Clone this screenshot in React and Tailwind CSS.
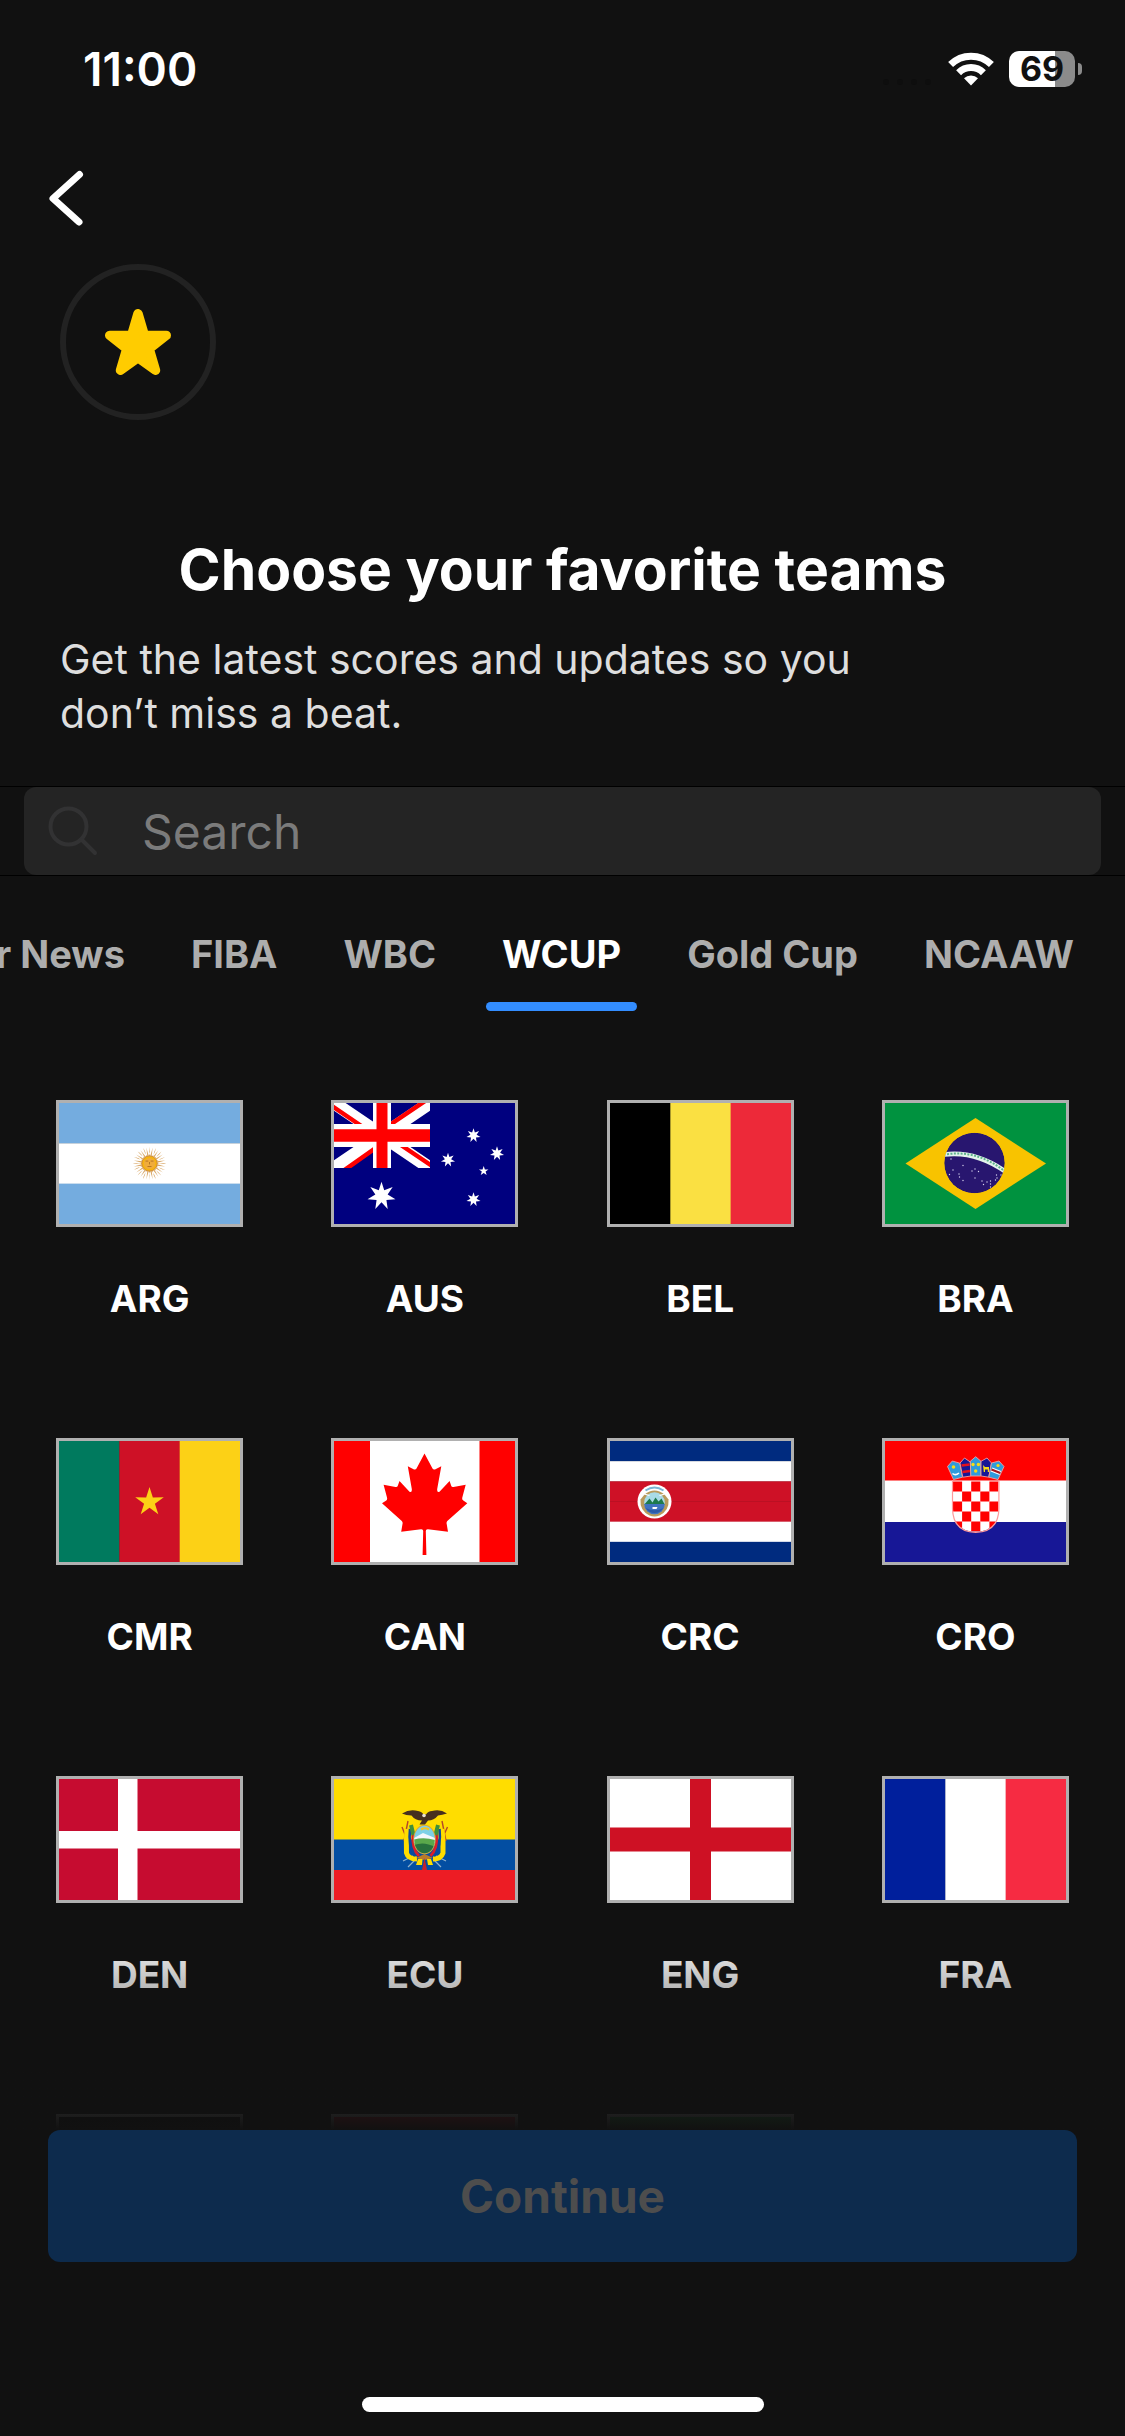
const FLAG_W = 181
const FLAG_H = 121

// polygon points of a star with n tips around (cx, cy), first tip up
function starPoints(cx, cy, outer, inner, n) {
  const pts = []
  for (let i = 0; i < n * 2; i++) {
    const r = i % 2 === 0 ? outer : inner
    const a = (Math.PI * i) / n - Math.PI / 2
    pts.push(`${(cx + r * Math.cos(a)).toFixed(2)},${(cy + r * Math.sin(a)).toFixed(2)}`)
  }
  return pts.join(' ')
}

function Bands({ colors, vertical = false }) {
  const size = (vertical ? FLAG_W : FLAG_H) / colors.length
  return colors.map((c, i) => (
    <rect
      key={i}
      x={vertical ? i * size : 0}
      y={vertical ? 0 : i * size}
      width={vertical ? size + 0.3 : FLAG_W}
      height={vertical ? FLAG_H : size + 0.3}
      fill={c}
    />
  ))
}

function Argentina() {
  const rays = Array.from({ length: 32 }, (_, i) => i * 11.25)
  return (
    <>
      <Bands colors={['#74acdf', '#ffffff', '#74acdf']} />
      <g transform="translate(90.5 60.5)">
        {rays.map((deg, i) => (
          <path
            key={deg}
            d={i % 2 ? 'M-0.8 -7 L0 -16 L0.8 -7Z' : 'M-0.7 -7 Q1.4 -12 0 -16.8 Q-0.6 -12 0.7 -7Z'}
            transform={`rotate(${deg})`}
            fill="#d8a868"
          />
        ))}
        <circle r="7.6" fill="#f6b40e" stroke="#c98432" strokeWidth="0.8" />
        <circle r="5.6" fill="#f0ac3c" />
        <path d="M-4 -2.4h2.8M1.2 -2.4h2.8M0 -1.5v2.4M-2 3h4" stroke="#b0701e" strokeWidth="0.9" fill="none" />
      </g>
    </>
  )
}

function Australia() {
  return (
    <>
      <rect width="181" height="121" fill="#00007f" />
      <svg width="96" height="65" viewBox="0 0 96 65">
        <path d="M0 0L96 65M96 0L0 65" stroke="#fff" strokeWidth="13" />
        <path d="M-2 3L34 27.5M94 -4L52 24.5" stroke="#f00" strokeWidth="4.5" />
        <path d="M7 69.5L48 40.5M98 63L58 36" stroke="#f00" strokeWidth="4.5" />
        <path d="M48 0V65" stroke="#fff" strokeWidth="18" />
        <path d="M0 32.5H96" stroke="#fff" strokeWidth="23" />
        <path d="M48 0V65" stroke="#f00" strokeWidth="11" />
        <path d="M0 32.5H96" stroke="#f00" strokeWidth="12.5" />
      </svg>
      <g fill="#fff">
        <polygon points={starPoints(47.5, 93, 14.3, 6.3, 7)} />
        <polygon points={starPoints(139.5, 32.5, 7.2, 3.2, 7)} />
        <polygon points={starPoints(114, 57, 7.2, 3.2, 7)} />
        <polygon points={starPoints(163, 50.5, 7.2, 3.2, 7)} />
        <polygon points={starPoints(139.5, 96.5, 7.2, 3.2, 7)} />
        <polygon points={starPoints(149.7, 68, 5, 2, 5)} />
      </g>
    </>
  )
}

function Brazil() {
  const dots = [
    [66, 56], [68, 67], [64.5, 71.5], [74, 71], [74.5, 74], [78, 77.5], [78, 62.5], [87, 68], [90, 66], [93.5, 68.5],
    [90, 75], [97, 78], [98.5, 81.5], [102, 79], [105.5, 78], [105.5, 81], [105.5, 84], [110.5, 77], [112, 75], [111.5, 72], [116, 72],
  ]
  return (
    <>
      <rect width="181" height="121" fill="#00923f" />
      <polygon points="90.5,15 161,60.5 90.5,106 20.5,60.5" fill="#f8c300" />
      <clipPath id="globe">
        <circle cx="89.5" cy="60" r="30.3" />
      </clipPath>
      <g clipPath="url(#globe)">
        <circle cx="89.5" cy="60" r="30.3" fill="#28166f" />
        <path d="M56 52Q90 46 124 71" fill="none" stroke="#e4f3ec" strokeWidth="4.6" />
        <path d="M62 51.2Q92 47 118 67" fill="none" stroke="#5fb38d" strokeWidth="2" strokeDasharray="2 1.4" />
        {dots.map(([x, y], i) => (
          <circle key={i} cx={x} cy={y} r="0.7" fill="#d8d4ee" />
        ))}
      </g>
    </>
  )
}

function Cameroon() {
  return (
    <>
      <Bands vertical colors={['#007a5e', '#ce1126', '#fcd116']} />
      <polygon points={starPoints(90.5, 61, 15, 5.7, 5)} fill="#fcd116" />
    </>
  )
}

function Canada() {
  return (
    <>
      <rect width="181" height="121" fill="#fff" />
      <rect width="36" height="121" fill="#f00" />
      <rect x="145.5" width="35.5" height="121" fill="#f00" />
      <path
        d="M90.5 12.5 L98.5 27.5 Q99.5 29.2 101.5 28.2 L107.3 25.3 L103.2 48 Q102.8 52 105.5 50.8 L115.6 40 L117.3 45 Q117.8 46.4 119.5 46 L131.7 43.7 L128.3 56.5 Q127.8 58.6 129.3 59.5 L133.3 62.3 L113.3 80 Q112.2 81.3 112.7 83 L114 90.8 L94 88.2 Q91.8 88 91.8 90 L92.4 114 H88.6 L89.2 90 Q89.2 88 87 88.2 L67.2 90.8 L68.5 83 Q69 81.3 67.8 80 L48 62.3 L52.3 59.5 Q53.5 58.6 53 56.5 L49.6 43.7 L61.5 46 Q63.2 46.4 63.7 45 L65.5 40 L75.5 50.8 Q78.2 52 77.8 48 L73.8 25.3 L79.5 28.2 Q81.5 29.2 82.5 27.5Z"
        fill="#f00"
      />
    </>
  )
}

function CostaRica() {
  return (
    <>
      <Bands colors={['#002b7f', '#ffffff', '#ce1126', '#ce1126', '#ffffff', '#002b7f']} />
      <g transform="translate(44.5 60.5)">
        <circle r="17" fill="#fff" />
        <path d="M-9 -11Q0 -17 9 -11" stroke="#7ab6d6" strokeWidth="2" fill="none" />
        <path d="M-10 -7Q0 -15 10 -7L14 -2Q15 9 5 14Q0 16 -5 14Q-15 9 -14 -2Z" fill="#b99a5b" />
        <circle cy="1" r="10.3" fill="#a9dbe6" />
        <path d="M-10.2 3L-5 -3L-2 1L1 -4L4 0L7 -3L10.2 3Z" fill="#1d7a4d" />
        <path d="M-10.3 2.5H10.3A10.3 10.3 0 0 1 -10.3 2.5Z" fill="#3f73c0" />
        <path d="M-8.8 6.5Q0 11 8.8 6.5A10.3 10.3 0 0 1 -8.8 6.5Z" fill="#2c5aa8" />
        <path d="M-2 5.5L3 5.5L2 7.5H-2Z" fill="#fff" />
        <path d="M-12 -8L-5 -6M12 -8L5 -6" stroke="#fff" strokeWidth="1.2" />
      </g>
    </>
  )
}

function Croatia() {
  const squares = []
  for (let r = 0; r < 5; r++) {
    for (let c = 0; c < 5; c++) {
      if ((r + c) % 2 === 0) squares.push([c, r])
    }
  }
  return (
    <>
      <rect width="181" height="121" fill="#fff" />
      <rect width="181" height="39.5" fill="#f00" />
      <rect y="81" width="181" height="40" fill="#171796" />
      <clipPath id="shield">
        <path d="M67.8 40V68Q68.5 90.5 90.7 90.8Q113 90.5 113.6 68V40Z" />
      </clipPath>
      <g clipPath="url(#shield)">
        <rect x="66" y="38" width="50" height="54" fill="#fff" />
        {squares.map(([c, r]) => (
          <rect key={`${c}-${r}`} x={68 + c * 9.1} y={40.5 + r * 10} width="9.1" height="10" fill="#f00" />
        ))}
      </g>
      <path d="M67.5 39V68Q68.3 91 90.7 91.3Q113.3 91 113.9 68V39" fill="none" stroke="#ff9a9a" strokeWidth="1.2" />
      <g stroke="#f2a0a0" strokeWidth="0.9" strokeLinejoin="round">
        <path d="M62.5 25.5L67.3 20L74.8 22.2L77.5 36.2L68.5 38.5Z" fill="#2f9bdc" />
        <path d="M75 22L79.5 17L85.3 21L86 35L77.8 36.2Z" fill="#171796" />
        <path d="M85.3 20.3L90.7 15.7L96 20.3V35H85.8Z" fill="#2f9bdc" />
        <path d="M96 20.3L102 17L106.5 22L103.8 36.2L96 35Z" fill="#171796" />
        <path d="M106.5 22L114 20L119 25.5L113 38.5L103.8 36.2Z" fill="#2f9bdc" />
      </g>
      <path d="M76.5 24.5L84.6 23.5M77.5 31L85 30" stroke="#e6101c" strokeWidth="2.6" />
      <g fill="#f7db17">
        <circle cx="68.5" cy="26" r="1.8" />
        <circle cx="88" cy="23.5" r="1.7" />
        <circle cx="93.4" cy="23.5" r="1.7" />
        <circle cx="90.7" cy="30" r="1.7" />
        <circle cx="113" cy="24.5" r="1.6" />
        <path d="M98 24L100 26H104V31H102.8V28.5H100V31H98.8Z" />
      </g>
      <path d="M67.5 32.5Q70.5 35 74 32" stroke="#fff" strokeWidth="1.6" fill="none" />
      <path d="M106.5 28.5L115.3 32" stroke="#fff" strokeWidth="4.4" />
      <path d="M106.5 28.5L115.3 32" stroke="#a8161c" strokeWidth="2.2" />
    </>
  )
}

function Denmark() {
  return (
    <>
      <rect width="181" height="121" fill="#c60c30" />
      <path d="M59 0H78.5V52H181V69.5H78.5V121H59V69.5H0V52H59Z" fill="#fff" />
    </>
  )
}

function Ecuador() {
  return (
    <>
      <rect width="181" height="121" fill="#ffdd00" />
      <rect y="60.5" width="181" height="31" fill="#034ea2" />
      <rect y="91" width="181" height="30" fill="#ed1c24" />
      {/* lances */}
      <path d="M74 42L70 62M108 42L112 62M68 48L72 58M113.5 48L109 58" stroke="#b5472a" strokeWidth="1.4" />
      <path d="M79 77L69 82M102 77L112 82M82 80L74 88M99 80L107 88" stroke="#8fb0cc" strokeWidth="1.2" />
      {/* side flags */}
      <path d="M73 50Q72 62 72.5 74Q74 80 83 80" stroke="#ffdd00" strokeWidth="5" fill="none" />
      <path d="M108 50Q109.5 62 109 74Q107 80 99 80" stroke="#ffdd00" strokeWidth="5" fill="none" />
      <path d="M76 50Q74 68 81 77M105.5 50Q107.5 68 100 77" stroke="#0b4a9c" strokeWidth="2.6" fill="none" />
      <path d="M79 54Q77.5 70 85 77M102.5 54Q104 70 96.5 77" stroke="#d81e2c" strokeWidth="2.8" fill="none" />
      <path d="M77 46L79.5 56M104 46L101.5 56" stroke="#3f8f3a" strokeWidth="4" />
      <path d="M82 79L90.5 75L99 79L90.5 81Z" fill="#b97a2a" />
      <path d="M84 80L82 86L88 86L88.5 80ZM93 80L94 86L99 86L97 80Z" fill="#ffdd00" />
      <path d="M90.5 79L88 91H93Z" fill="#c4222c" />
      <clipPath id="oval">
        <ellipse cx="90.5" cy="60.5" rx="10.3" ry="13.8" />
      </clipPath>
      <ellipse cx="90.5" cy="60.5" rx="11.2" ry="14.8" fill="#d8a53a" />
      <g clipPath="url(#oval)">
        <rect x="78" y="45" width="25" height="32" fill="#7fd0e6" />
        <path d="M80 59L89 54L101 59V64H80Z" fill="#f4f7fb" />
        <path d="M80 60.5Q90 58 101 61V77H80Z" fill="#5aa84b" />
        <path d="M80 66Q90 62 101 68V77H80Z" fill="#27703c" />
        <path d="M87 50.5Q91 48 95 50.5" stroke="#f7c520" strokeWidth="2.2" fill="none" />
      </g>
      {/* condor */}
      <path
        d="M68 34.5Q76 29.5 84 32Q88 32.5 89.5 35.5L92 35.5Q94 32 98 32Q106 29.5 113 34.5Q108 36 104 36.5Q100 41.5 94 41.5L91 45.5H85.5L88 41.5Q81 41.5 77.5 36.5Q72 36.5 68 34.5Z"
        fill="#46301f"
      />
      <circle cx="90" cy="36.5" r="1.8" fill="#e8e0d4" />
    </>
  )
}

function England() {
  return (
    <>
      <rect width="181" height="121" fill="#fff" />
      <path d="M80 0H101V48.5H181V72.5H101V121H80V72.5H0V48.5H80Z" fill="#ce1124" />
    </>
  )
}

const teams = [
  { code: 'ARG', flag: <Argentina /> },
  { code: 'AUS', flag: <Australia /> },
  { code: 'BEL', flag: <Bands vertical colors={['#000000', '#fae042', '#ed2939']} /> },
  { code: 'BRA', flag: <Brazil /> },
  { code: 'CMR', flag: <Cameroon /> },
  { code: 'CAN', flag: <Canada /> },
  { code: 'CRC', flag: <CostaRica /> },
  { code: 'CRO', flag: <Croatia /> },
  { code: 'DEN', flag: <Denmark /> },
  { code: 'ECU', flag: <Ecuador /> },
  { code: 'ENG', flag: <England /> },
  { code: 'FRA', flag: <Bands vertical colors={['#001f9c', '#ffffff', '#f62b42']} /> },
]

// flags that only peek out above the footer
const nextTeams = [
  { id: 'ger', flag: <Bands colors={['#000000', '#dd0000', '#ffce00']} /> },
  { id: 'gha', flag: <Bands colors={['#ce1126', '#fcd116', '#006b3f']} /> },
  { id: 'irn', flag: <Bands colors={['#239f40', '#ffffff', '#da0000']} /> },
]

const tabs = ['Soccer News', 'FIBA', 'WBC', 'WCUP', 'Gold Cup', 'NCAAW']

function Flag({ children }) {
  return (
    <svg viewBox="0 0 181 121" className="h-[127px] w-[187px] border-[3px] border-[#b0b0b0]">
      {children}
    </svg>
  )
}

function StatusBar() {
  return (
    <div className="flex h-[138px] shrink-0 items-center justify-between pr-[43px] pl-[83px]">
      <span className="text-[46px] leading-none font-semibold">11:00</span>
      <div className="flex items-center gap-[15px]">
        <svg width="52" height="34" viewBox="0 0 52 34" fill="#0e0e0e" aria-label="No signal">
          <circle cx="5" cy="30" r="3" />
          <circle cx="19" cy="30" r="3" />
          <circle cx="33" cy="30" r="3" />
          <circle cx="47" cy="30" r="3" />
        </svg>
        <svg width="46" height="34" viewBox="0 0 46 34" fill="none" aria-label="Wi-Fi">
          <path d="M2.6 12.6A29 29 0 0 1 43.4 12.6" stroke="#fff" strokeWidth="7" />
          <path d="M10.6 20.7A17.6 17.6 0 0 1 35.4 20.7" stroke="#fff" strokeWidth="7" />
          <path d="M23 33.5L16 26.3A10 10 0 0 1 30 26.3Z" fill="#fff" />
        </svg>
        <div className="flex items-center gap-[3px]">
          <div className="flex h-9 w-[66px] items-center justify-center rounded-[10px] bg-linear-to-r from-white from-70% to-[#8b8b8b] to-70%">
            <span className="text-[34px] leading-none font-bold text-[#111]">69</span>
          </div>
          <div className="h-3 w-1 rounded-r-full bg-[#8b8b8b]" />
        </div>
      </div>
    </div>
  )
}

function Header() {
  return (
    <header className="shrink-0">
      <button type="button" aria-label="Back" className="ml-12 block h-[120px]">
        <svg width="36" height="56" viewBox="0 0 36 56" fill="none">
          <path d="M31.500 4.500L5 28.500L31 52" stroke="#fff" strokeWidth="7" strokeLinecap="round" strokeLinejoin="round" />
        </svg>
      </button>
      <div className="mt-[6px] ml-[60px] flex size-[156px] items-center justify-center rounded-full border-[6px] border-[#222]">
        <svg width="66" height="66" viewBox="0 0 66 66">
          <path
            d="M33 4.700L39.400 26.400H61.300L44.200 39.700L50.500 61.300L33 48.600L15.500 61.300L21.800 39.700L4.700 26.400H26.600Z"
            fill="#ffcc00"
            stroke="#ffcc00"
            strokeWidth="9.4"
            strokeLinejoin="round"
          />
        </svg>
      </div>
      <h1 className="mt-[114px] text-center text-[57px] leading-[72px] font-bold">Choose your favorite teams</h1>
      <p className="mt-[26px] ml-[60px] max-w-[820px] text-[41px] leading-[54px] text-[#dedede]">
        Get the latest scores and updates so you don’t miss a beat.
      </p>
    </header>
  )
}

function SearchBox() {
  return (
    <div className="mt-[46px] shrink-0 border-y border-black px-6">
      <label className="flex h-[88px] items-center rounded-xl bg-[#242424] pl-6">
        <svg width="50" height="50" viewBox="0 0 50 50" fill="none" stroke="#323233" strokeWidth="4" strokeLinecap="round">
          <circle cx="20.500" cy="20.500" r="18" />
          <path d="M34 34L47 47" />
        </svg>
        <input
          type="text"
          aria-label="Search"
          placeholder="Search"
          className="ml-[44px] min-w-0 flex-1 bg-transparent text-[48px] leading-none outline-none placeholder:text-[#7b7b7b]"
        />
      </label>
    </div>
  )
}

function LeagueTabs() {
  return (
    <nav className="mt-[42px] flex shrink-0 justify-end gap-[34px] overflow-hidden pr-[35px]">
      {tabs.map((tab) => (
        <button
          key={tab}
          type="button"
          className={`flex shrink-0 flex-col items-center text-[38px] font-bold whitespace-nowrap ${
            tab === 'WCUP' ? 'text-white' : 'text-[#adadad]'
          }`}
        >
          <span className="px-4 leading-[72px]">{tab}</span>
          <span className={`mt-3 h-[9px] self-stretch rounded-full ${tab === 'WCUP' ? 'bg-[#338dff]' : ''}`} />
        </button>
      ))}
    </nav>
  )
}

export default function App() {
  return (
    <div className="flex h-screen flex-col overflow-hidden bg-[#111] font-['Inter',sans-serif] text-white">
      <StatusBar />
      <Header />
      <SearchBox />
      <LeagueTabs />

      <main className="relative mt-6 min-h-0 flex-1 overflow-hidden">
        <div className="grid grid-cols-4 px-3 pt-[65px]">
          {teams.map((team) => (
            <button key={team.code} type="button" className="flex h-[338px] flex-col items-center">
              <Flag>{team.flag}</Flag>
              <span className="mt-12 text-[37px] leading-[48px] font-bold">{team.code}</span>
            </button>
          ))}
          {nextTeams.map((team) => (
            <div key={team.id} className="flex justify-center">
              <Flag>{team.flag}</Flag>
            </div>
          ))}
        </div>
        <div className="pointer-events-none absolute inset-x-0 bottom-0 h-[200px] bg-linear-to-t from-[#111] to-transparent" />
      </main>

      <footer className="flex shrink-0 flex-col px-12 pb-6">
        <button type="button" disabled className="h-[132px] rounded-xl bg-[#0d2b4d] text-[46px] font-bold text-[#4d4d4d]">
          Continue
        </button>
        <div className="mt-[135px] h-[15px] w-[402px] self-center rounded-full bg-white" />
      </footer>
    </div>
  )
}
